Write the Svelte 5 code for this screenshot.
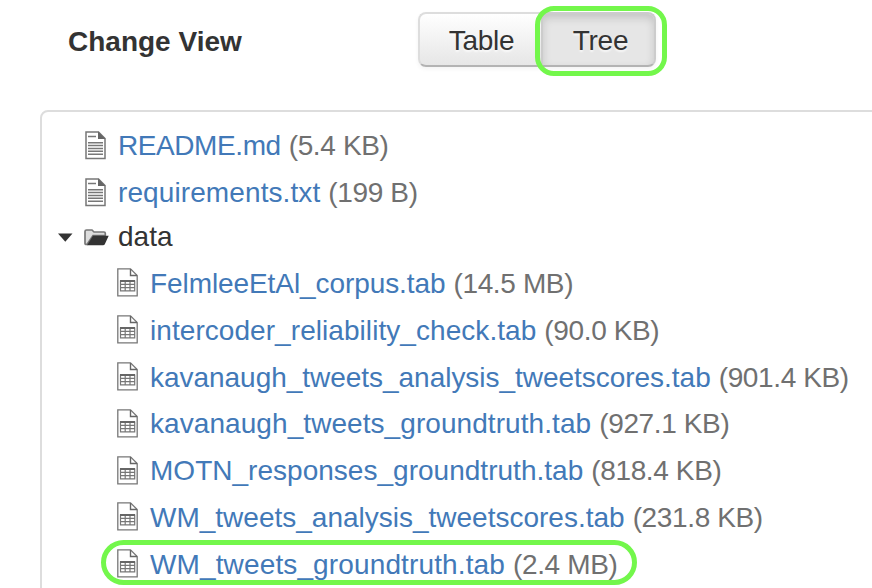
<script>
  // tracking: per-name letter spacing in px
  const rootFiles = [
    { name: 'README.md', size: '5.4 KB', tracking: -0.42 },
    { name: 'requirements.txt', size: '199 B', tracking: 0.1 }
  ];
  const dataFiles = [
    { name: 'FelmleeEtAl_corpus.tab', size: '14.5 MB', tracking: -0.08 },
    { name: 'intercoder_reliability_check.tab', size: '90.0 KB', tracking: 0.06 },
    { name: 'kavanaugh_tweets_analysis_tweetscores.tab', size: '901.4 KB', tracking: -0.03 },
    { name: 'kavanaugh_tweets_groundtruth.tab', size: '927.1 KB', tracking: 0.07 },
    { name: 'MOTN_responses_groundtruth.tab', size: '818.4 KB', tracking: 0.02 },
    { name: 'WM_tweets_analysis_tweetscores.tab', size: '231.8 KB', tracking: 0 },
    { name: 'WM_tweets_groundtruth.tab', size: '2.4 MB', tracking: 0.13, marked: true }
  ];
  let view = $state('Tree');
</script>

<div class="page">
  <header>
    <strong>Change View</strong>
    <div class="group">
      <button class:active={view === 'Table'} onclick={() => (view = 'Table')}>Table</button>
      <button class:active={view === 'Tree'} onclick={() => (view = 'Tree')}>Tree<span class="ring"></span></button>
    </div>
  </header>

  <main>
    {#each rootFiles as file}
      <div class="row">
        <svg class="doc" viewBox="0 0 21 29" width="21" height="29">
          <path d="M1 1H13.5L20 7.5V27.5H1Z" fill="#fff" stroke="#777" stroke-width="1.5" />
          <path d="M13 .5L20.5 8H13Z" fill="#666" />
          <path d="M3 5.5H11M3 11.8H18M3 14.6H18M3 17.4H18M3 20.2H18M3 23.2H18" stroke="#777" stroke-width="1.5" />
        </svg>
        <a href="#file" style:letter-spacing="{file.tracking}px">{file.name}</a><span class="size">({file.size})</span>
      </div>
    {/each}
    <div class="row folder">
      <svg class="caret" viewBox="0 0 16 9" width="16" height="9"><path d="M0 .5H14.5L7.3 8.7Z" fill="#333" /></svg>
      <svg class="dir" viewBox="0 0 25 17" width="25" height="17">
        <path d="M1 14.5V2.5Q1 1 2.5 1H8L10 3H20Q21.3 3 21.3 4.5V6.5H9L3 15.5Q1 15.5 1 14.5Z" fill="#ddd" stroke="#777" stroke-width="1.7" />
        <path d="M9 6.7H24.7L20.8 15.2Q20.3 16.3 19 16.3H3Z" fill="#333" />
      </svg>
      <span class="name">data</span>
    </div>
    {#each dataFiles as file}
      <div class="row child">
        <svg class="doc" viewBox="0 0 21 29" width="21" height="29">
          <path d="M.8 .8H13.5L20.2 7.5V27.8H.8Z" fill="#fff" stroke="#777" stroke-width="1.3" />
          <path d="M13.5 1V7.5H20" fill="none" stroke="#666" stroke-width="1.4" />
          <path d="M3.5 13H17.7V22.8H3.5ZM3.5 16.3H17.7M3.5 19.6H17.7M8.2 13V22.8M13 13V22.8" fill="none" stroke="#777" stroke-width="1.2" />
          <path d="M3 13H18" stroke="#666" stroke-width="2" />
        </svg>
        <a href="#file" style:letter-spacing="{file.tracking}px">{file.name}</a><span class="size">({file.size})</span>
        {#if file.marked}<span class="marker"></span>{/if}
      </div>
    {/each}
  </main>
</div>

<style>
  .page {
    width: 872px;
    height: 588px;
    overflow: hidden;
    background: #fff;
    color: #333;
    font: 28px/40px "Liberation Sans", Arial, sans-serif;
    box-sizing: border-box;
    padding-left: 40px;
  }
  header {
    display: flex;
    align-items: flex-start;
    height: 110px;
    padding: 12px 0 0 28px;
    box-sizing: border-box;
  }
  strong {
    width: 350px;
    line-height: 60px;
  }
  .group {
    display: flex;
    height: 55px;
  }
  button {
    position: relative;
    font: inherit;
    letter-spacing: -0.3px;
    color: #333;
    width: 123px;
    padding: 2px 0 0 2px;
    border: 2px solid #ddd;
    border-bottom-color: #b3b3b3;
    border-right: 0;
    border-radius: 8px 0 0 8px;
    background: linear-gradient(#fff, #e6e6e6);
    text-shadow: 0 2px 2px rgba(255, 255, 255, .75);
    box-shadow: 0 2px 4px rgba(0, 0, 0, .05);
  }
  button + button {
    width: 115px;
    padding: 2px 0 0 4px;
    border-right: 2px solid #ccc;
    border-radius: 0 8px 8px 0;
  }
  button.active {
    background: #e6e6e6;
    border-color: #ccc #ccc #b3b3b3;
    box-shadow: inset 0 4px 8px rgba(0, 0, 0, .15), 0 2px 4px rgba(0, 0, 0, .05);
  }
  .ring {
    position: absolute;
    left: -8px;
    top: -8px;
    width: 132px;
    height: 70px;
    box-sizing: border-box;
    border: 5px solid #73f74b;
    border-radius: 19px;
  }
  main {
    width: 900px;
    height: 520px;
    box-sizing: border-box;
    border: 2px solid #ddd;
    border-radius: 8px;
    padding: 11px 0 0 16px;
  }
  .row {
    position: relative;
    display: flex;
    align-items: center;
    height: 46.8px;
    padding-left: 27px;
    white-space: nowrap;
  }
  .row.folder {
    height: 42px;
    padding: 0 0 2px;
  }
  .row.child {
    padding-left: 59px;
  }
  a {
    color: #4279b8;
    text-decoration: none;
  }
  .size {
    color: #707070;
    margin-left: 8px;
    letter-spacing: -0.37px;
  }
  .doc {
    flex: none;
    margin-right: 12px;
    position: relative;
    top: -1px;
  }
  .caret {
    margin-right: 10px;
  }
  .dir {
    margin-right: 9px;
  }
  .name {
    margin-bottom: 1px;
  }
  .marker {
    position: absolute;
    left: 43px;
    top: -1px;
    width: 536px;
    height: 45px;
    box-sizing: border-box;
    border: 5px solid #73f74b;
    border-radius: 23px;
  }
</style>
